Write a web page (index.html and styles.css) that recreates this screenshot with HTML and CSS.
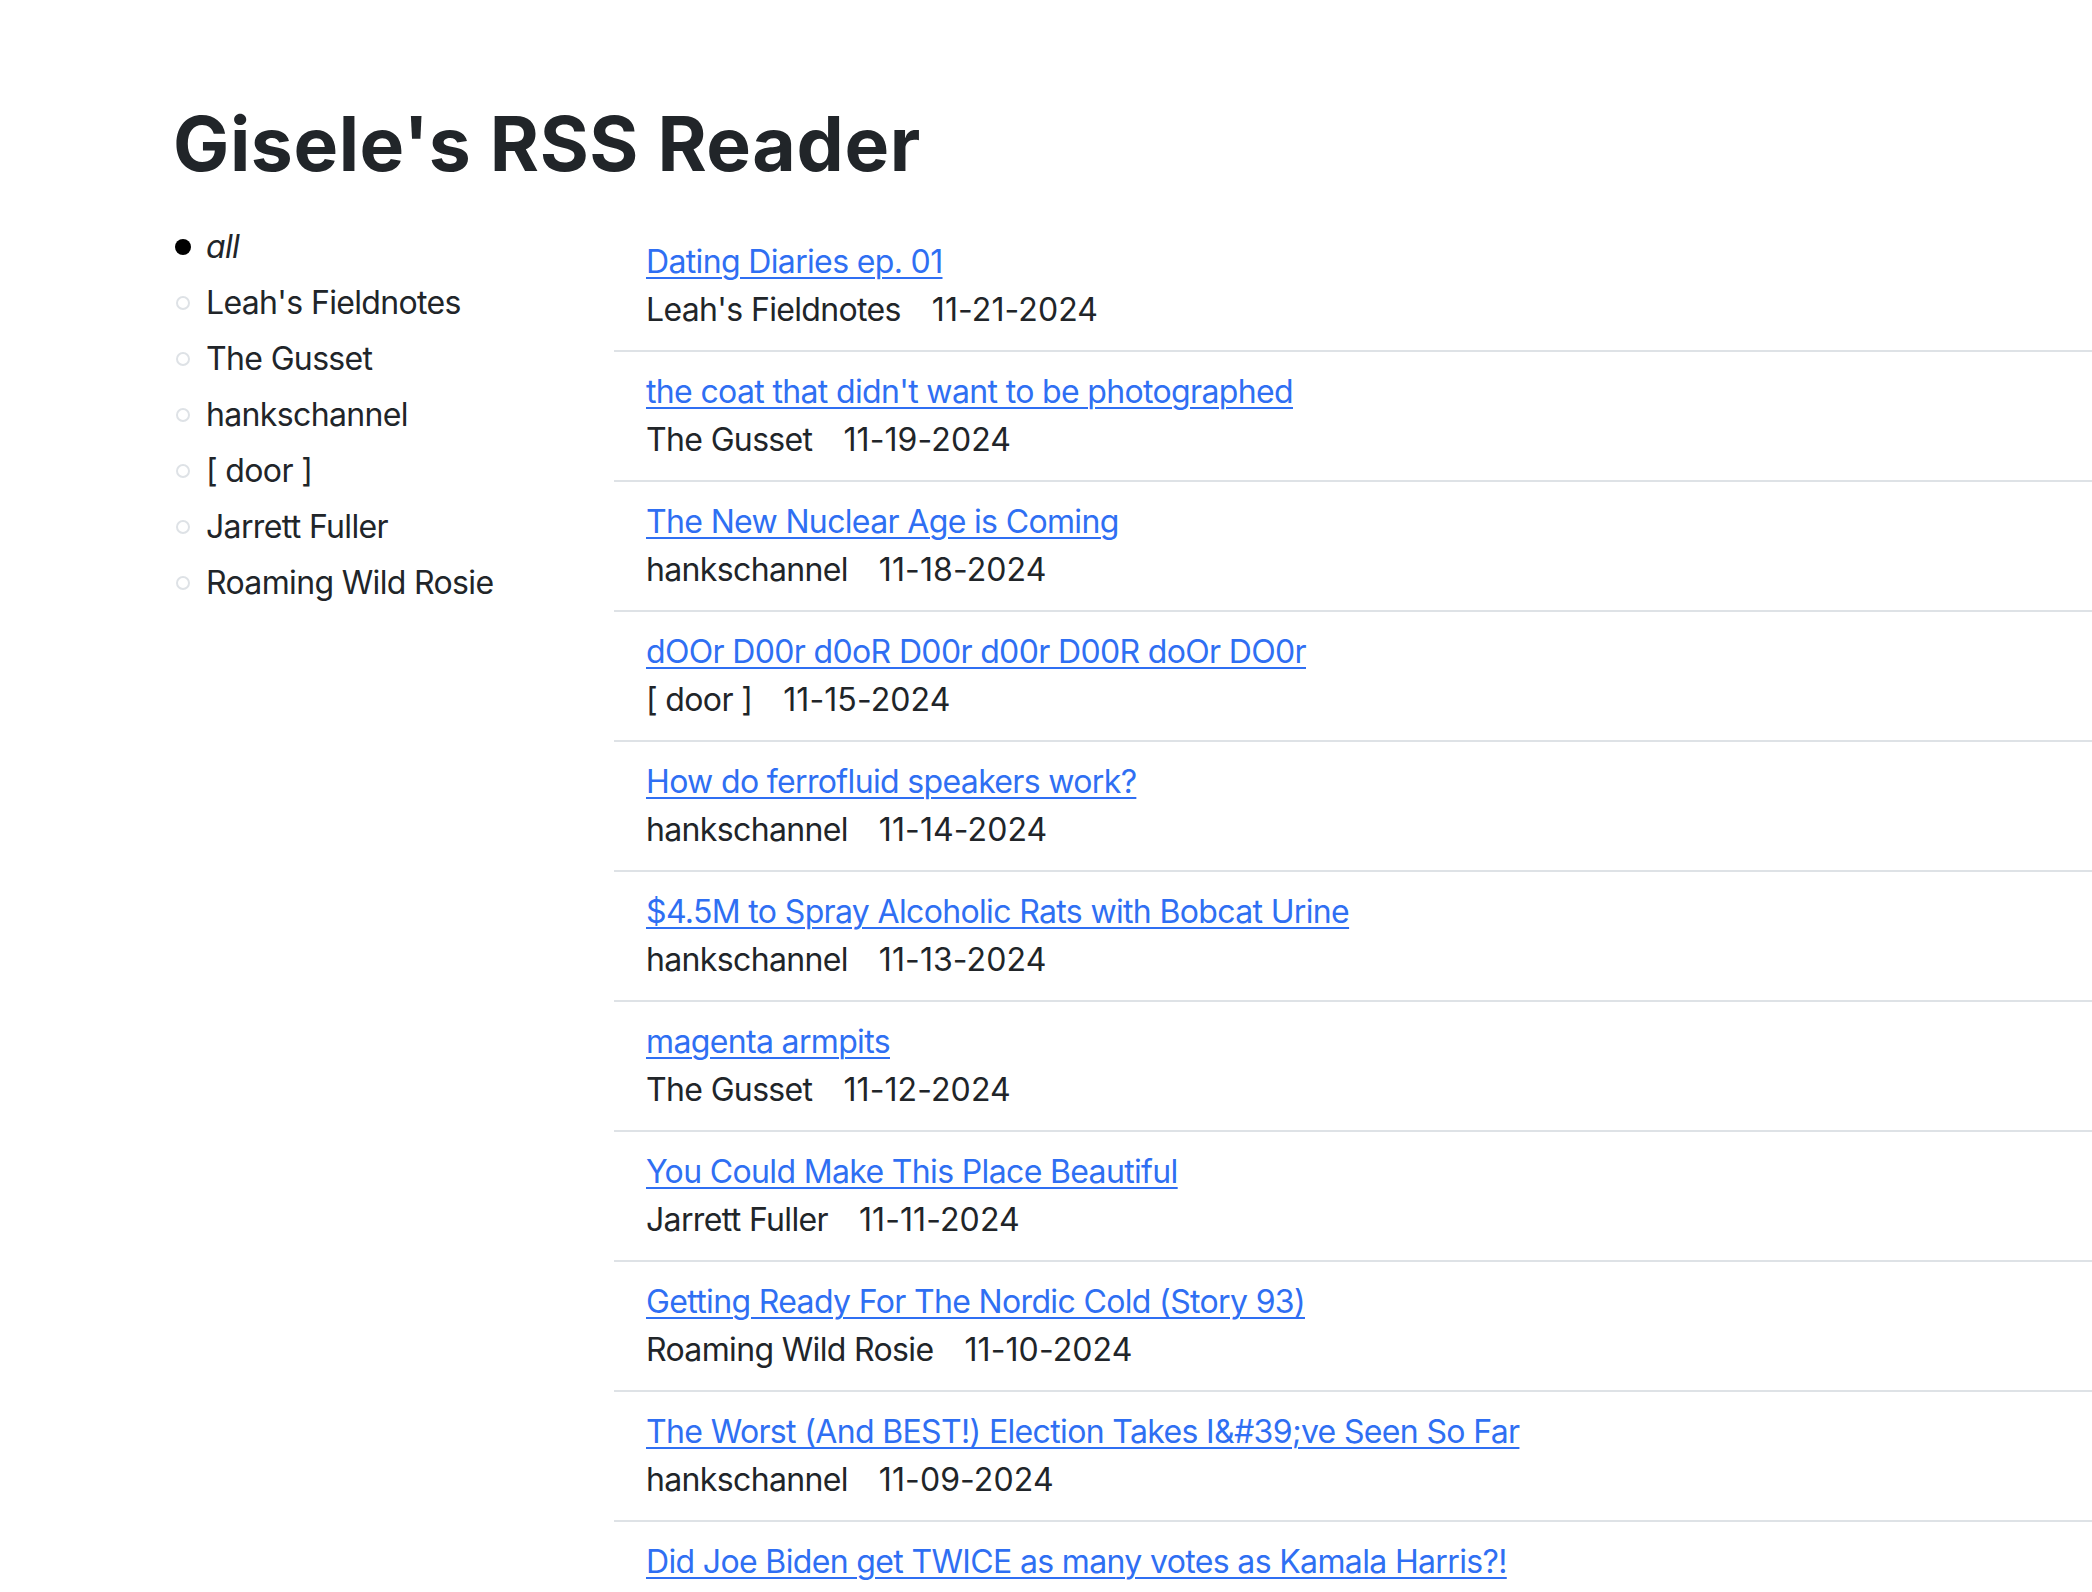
FILE: index.html
```html
<!DOCTYPE html>
<html lang="en">
<head>
<meta charset="utf-8">
<title>Gisele's RSS Reader</title>
<link rel="stylesheet" href="styles.css">
</head>
<body>
<div class="page">
  <h1 class="title">Gisele's RSS Reader</h1>
  <div class="layout">
    <ul class="feeds">
      <li class="feed active"><span class="dot"></span><span class="feed-name">all</span></li>
      <li class="feed"><span class="dot"></span><span class="feed-name">Leah's Fieldnotes</span></li>
      <li class="feed"><span class="dot"></span><span class="feed-name">The Gusset</span></li>
      <li class="feed"><span class="dot"></span><span class="feed-name">hankschannel</span></li>
      <li class="feed"><span class="dot"></span><span class="feed-name">[ door ]</span></li>
      <li class="feed"><span class="dot"></span><span class="feed-name">Jarrett Fuller</span></li>
      <li class="feed"><span class="dot"></span><span class="feed-name">Roaming Wild Rosie</span></li>
    </ul>
    <ul class="posts">
      <li class="post"><a class="post-link" href="#">Dating Diaries ep. 01</a><div class="meta"><span class="source">Leah's Fieldnotes</span><span class="date">11-21-2024</span></div></li>
      <li class="post"><a class="post-link" href="#">the coat that didn't want to be photographed</a><div class="meta"><span class="source">The Gusset</span><span class="date">11-19-2024</span></div></li>
      <li class="post"><a class="post-link" href="#">The New Nuclear Age is Coming</a><div class="meta"><span class="source">hankschannel</span><span class="date">11-18-2024</span></div></li>
      <li class="post"><a class="post-link" href="#">dOOr D00r d0oR D00r d00r D00R doOr DO0r</a><div class="meta"><span class="source">[ door ]</span><span class="date">11-15-2024</span></div></li>
      <li class="post"><a class="post-link" href="#">How do ferrofluid speakers work?</a><div class="meta"><span class="source">hankschannel</span><span class="date">11-14-2024</span></div></li>
      <li class="post"><a class="post-link" href="#">$4.5M to Spray Alcoholic Rats with Bobcat Urine</a><div class="meta"><span class="source">hankschannel</span><span class="date">11-13-2024</span></div></li>
      <li class="post"><a class="post-link" href="#">magenta armpits</a><div class="meta"><span class="source">The Gusset</span><span class="date">11-12-2024</span></div></li>
      <li class="post"><a class="post-link" href="#">You Could Make This Place Beautiful</a><div class="meta"><span class="source">Jarrett Fuller</span><span class="date">11-11-2024</span></div></li>
      <li class="post"><a class="post-link" href="#">Getting Ready For The Nordic Cold (Story 93)</a><div class="meta"><span class="source">Roaming Wild Rosie</span><span class="date">11-10-2024</span></div></li>
      <li class="post"><a class="post-link" href="#">The Worst (And BEST!) Election Takes I&amp;#39;ve Seen So Far</a><div class="meta"><span class="source">hankschannel</span><span class="date">11-09-2024</span></div></li>
      <li class="post"><a class="post-link" href="#">Did Joe Biden get TWICE as many votes as Kamala Harris?!</a><div class="meta"><span class="source">hankschannel</span><span class="date">11-08-2024</span></div></li>
    </ul>
  </div>
</div>
</body>
</html>
```
FILE: styles.css
```css
html, body {
  margin: 0;
  padding: 0;
  background: #ffffff;
}
body {
  font-family: Inter, "Noto Sans", "Liberation Sans", sans-serif;
  font-size: 32px;
  line-height: 48px;
  letter-spacing: -0.65px;
  color: #212529;
  overflow: hidden;
}
.page {
  padding-left: 173px;
}
.title {
  margin: 0;
  padding-top: 99px;
  font-size: 75px;
  line-height: 90px;
  font-weight: 700;
  letter-spacing: 0.6px;
  color: #212529;
  margin-bottom: 30px;
}
.layout {
  display: flex;
  align-items: flex-start;
}
.feeds {
  list-style: none;
  margin: 0;
  padding: 0;
  width: 441px;
  flex: 0 0 441px;
}
.feed {
  display: flex;
  align-items: center;
  height: 56px;
  line-height: 56px;
}
.dot {
  width: 14px;
  height: 14px;
  border: 2px solid #dee2e6;
  border-radius: 50%;
  box-sizing: border-box;
  margin-left: 3px;
  margin-right: 16px;
  flex: 0 0 auto;
}
.feed.active .dot {
  width: 16px;
  height: 16px;
  margin-left: 2px;
  margin-right: 15px;
  background: #000;
  border: none;
}
.feed.active .feed-name {
  font-style: italic;
}
.posts {
  list-style: none;
  margin: 0;
  padding: 0;
  flex: 1 1 auto;
  margin-top: 3px;
}
.post {
  padding: 16px 32px;
  border-bottom: 2px solid #dee2e6;
}
.post-link {
  display: block;
  color: #2f6ff3;
  text-decoration: underline;
  text-decoration-thickness: 2px;
  text-underline-offset: 4px;
}
.meta {
  display: flex;
}
.source {
  margin-right: 31px;
}
.date {
  letter-spacing: 0.1px;
}
```
